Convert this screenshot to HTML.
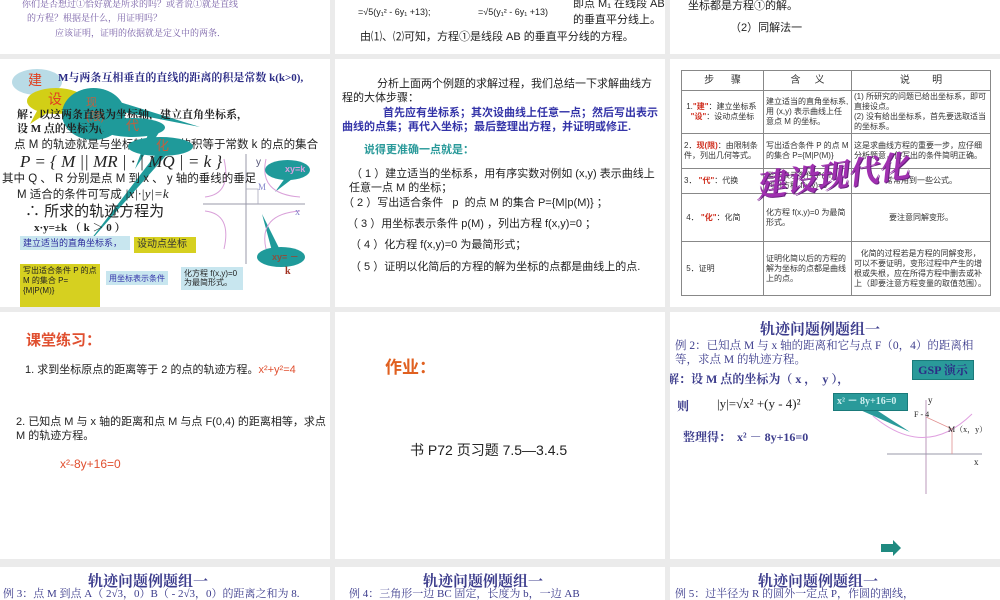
<!DOCTYPE html>
<html><head><meta charset="utf-8">
<style>
*{margin:0;padding:0;box-sizing:border-box}
body{width:1000px;height:600px;background:#ebebeb;position:relative;overflow:hidden;font-family:"Liberation Sans","Noto Sans CJK SC",sans-serif;color:#222}
.p{position:absolute;background:#fff;overflow:hidden}
.t{position:absolute;white-space:nowrap;font-size:11px;line-height:13px}
.s{font-family:"Liberation Serif","Noto Serif CJK SC",serif}
.nv{color:#2c2c86}
.ell{position:absolute;border-radius:50%}
.tl{background:#1f9a9a}
.yl{background:#d2cf16}
.box{position:absolute;font-size:9px;line-height:11px;padding:2px 3px;white-space:nowrap}
.ttl{position:absolute;font-size:15px;font-weight:bold;color:#3c3c8c;white-space:nowrap;font-family:"Liberation Serif","Noto Serif CJK SC",serif}
table{border-collapse:collapse;position:absolute;left:11px;top:11px;width:310px}
td{border:1px solid #888;font-size:8px;line-height:10px;color:#333;padding:1px 2px;vertical-align:middle}
</style></head><body>

<!-- Row 1 -->
<div class="p" style="left:0;top:0;width:330px;height:54px">
 <div class="t s" style="left:22px;top:-2px;font-size:9px;color:#7a62a8">你们是否想过①恰好就是所求的吗？或者说①就是直线</div>
 <div class="t s" style="left:27px;top:12px;font-size:9px;color:#7a62a8">的方程？根据是什么，用证明吗？</div>
 <div class="t s" style="left:55px;top:27px;font-size:9px;color:#7a62a8">应该证明，证明的依据就是定义中的两条．</div>
</div>
<div class="p" style="left:335px;top:0;width:330px;height:54px">
 <div class="t" style="left:23px;top:6px;font-size:9px">=√5(y₁² - 6y₁ +13);</div>
 <div class="t" style="left:143px;top:6px;font-size:9px">=√5(y₁² - 6y₁ +13)</div>
 <div class="t" style="left:238px;top:-2px">即点 M₁ 在线段 AB</div>
 <div class="t" style="left:238px;top:14px">的垂直平分线上。</div>
 <div class="t" style="left:25px;top:31px">由⑴、⑵可知，方程①是线段 AB 的垂直平分线的方程。</div>
</div>
<div class="p" style="left:670px;top:0;width:330px;height:54px">
 <div class="t" style="left:18px;top:0px">坐标都是方程①的解。</div>
 <div class="t" style="left:60px;top:22px">（2）同解法一</div>
</div>

<!-- Row 2 panel 1 -->
<div class="p" style="left:0;top:59px;width:330px;height:248px">
 <div class="ell" style="left:12px;top:10px;width:50px;height:26px;background:#b9dbe6"></div>
 <div class="t" style="left:28px;top:15px;font-size:14px;color:#e04020">建</div>
 <div class="t s nv" style="left:58px;top:13px;font-weight:bold">M与两条互相垂直的直线的距离的积是常数 k(k&gt;0),</div>
 <div class="ell yl" style="left:27px;top:29px;width:58px;height:26px"></div>
 <div class="t" style="left:48px;top:34px;font-size:14px;color:#e04020">设</div>
 <svg style="position:absolute;left:0;top:0" width="330" height="248">
  <polygon points="38,50 50,52 30,65" fill="#d2cf16"/>
  <polygon points="110,40 200,68 118,52" fill="#1f9a9a"/>
  <polygon points="150,70 135,110 160,72" fill="#1f9a9a"/>
  <polygon points="160,90 85,188 170,92" fill="#1f9a9a"/>
  <polygon points="288,115 275,133 296,117" fill="#1f9a9a"/>
  <polygon points="262,155 282,195 272,192" fill="#1f9a9a"/>
  <line x1="246" y1="95" x2="246" y2="205" stroke="#99a" stroke-width="1"/>
  <line x1="203" y1="145" x2="305" y2="145" stroke="#99a" stroke-width="1"/>
  <path d="M224,100 Q232,135 205,138 M266,100 Q258,135 300,138 M224,190 Q232,155 205,152 M266,190 Q258,155 300,152" fill="none" stroke="#d9a0d9" stroke-width="1"/>
  <path d="M246,130 H258 V145" fill="none" stroke="#aab" stroke-width="0.8"/>
 </svg>
 <div class="ell tl" style="left:62px;top:29px;width:63px;height:52px"></div>
 <div class="t" style="left:86px;top:37px;font-size:11px;color:#c06040;line-height:14px">现<br>(限)</div>
 <div class="t s" style="left:17px;top:50px;font-weight:bold;font-size:11px">解：以这两条直线为坐标轴，建立直角坐标系，</div>
 <div class="t s" style="left:17px;top:64px;font-weight:bold">设 M 点的坐标为(x,y)</div>
 <div class="ell tl" style="left:100px;top:59px;width:65px;height:19px"></div>
 <div class="t" style="left:126px;top:60px;font-size:13px;color:#c06040">代</div>
 <div class="t" style="left:14px;top:80px;font-size:11.5px">点 M 的轨迹就是与坐标轴的距离的积等于常数 k 的点的集合</div>
 <div class="ell tl" style="left:128px;top:78px;width:65px;height:19px"></div>
 <div class="t" style="left:156px;top:80px;font-size:13px;color:#c06040">化</div>
 <div class="t s" style="left:20px;top:93px;font-size:17px;line-height:20px;font-style:italic">P = { M || MR | · | MQ | = k }</div>
 <div class="t" style="left:2px;top:114px;font-size:11.5px">其中 Q 、 R 分别是点 M 到 x 、 y 轴的垂线的垂足</div>
 <div class="t" style="left:17px;top:128px;font-size:11.5px">M 适合的条件可写成 <i class="s" style="font-size:13px">|x|·|y|=k</i></div>
 <div class="t" style="left:25px;top:144px;font-size:15px;line-height:18px">∴ 所求的轨迹方程为</div>
 <div class="t s" style="left:34px;top:163px;font-weight:bold;font-size:11px">x·y=±k （ k ＞ 0 ）</div>
 <div class="t" style="left:256px;top:97px;font-size:10px;color:#557">y</div>
 <div class="t s" style="left:258px;top:122px;font-size:9px;color:#88c">M</div>
 <div class="t s" style="left:295px;top:147px;font-size:10px;color:#88c">x</div>
 <div class="ell tl" style="left:265px;top:101px;width:45px;height:20px"></div>
 <div class="t" style="left:285px;top:104px;font-size:9px;color:#d8a0e0;font-weight:bold">xy=k</div>
 <div class="ell tl" style="left:257px;top:188px;width:48px;height:20px"></div>
 <div class="t" style="left:272px;top:192px;font-size:9px;color:#8a5040;font-weight:bold">xy= －</div>
 <div class="t s" style="left:285px;top:206px;font-size:10px;color:#a03020;font-weight:bold">k</div>
 <div class="box" style="left:20px;top:177px;width:110px;height:14px;background:#c8e6ef;color:#2c2c9c">建立适当的直角坐标系，</div>
 <div class="box" style="left:134px;top:178px;width:62px;height:16px;background:#d6d020;color:#333;font-size:10px">设动点坐标</div>
 <div class="box" style="left:20px;top:205px;width:80px;height:43px;background:#d6d020;color:#222;font-size:8px;line-height:10px;white-space:normal">写出适合条件 P 的点<br>M 的集合 P={M|P(M)}</div>
 <div class="box" style="left:106px;top:212px;width:62px;height:14px;background:#c8e6ef;color:#3333aa;font-size:8px">用坐标表示条件</div>
 <div class="box" style="left:181px;top:208px;width:62px;height:23px;background:#c8e6ef;color:#222;font-size:8px;line-height:9px">化方程 f(x,y)=0<br>为最简形式。</div>
</div>

<!-- Row 2 panel 2 -->
<div class="p" style="left:335px;top:59px;width:330px;height:248px">
 <div class="t" style="left:42px;top:19px">分析上面两个例题的求解过程，我们总结一下求解曲线方</div>
 <div class="t" style="left:7px;top:33px">程的大体步骤：</div>
 <div class="t" style="left:48px;top:48px;font-weight:bold;color:#3434a8">首先应有坐标系；其次设曲线上任意一点；然后写出表示</div>
 <div class="t" style="left:7px;top:62px;font-weight:bold;color:#3434a8">曲线的点集；再代入坐标；最后整理出方程，并证明或修正.</div>
 <div class="t" style="left:29px;top:85px;font-weight:bold;color:#2a9a9a">说得更准确一点就是：</div>
 <div class="t" style="left:16px;top:109px">（ 1 ）建立适当的坐标系，用有序实数对例如 (x,y) 表示曲线上</div>
 <div class="t" style="left:14px;top:123px">任意一点 M 的坐标；</div>
 <div class="t" style="left:8px;top:138px">（ 2 ）写出适合条件&nbsp;&nbsp; p&nbsp; 的点 M 的集合 P={M|p(M)} ；</div>
 <div class="t" style="left:12px;top:159px">（ 3 ）用坐标表示条件 p(M) ，列出方程 f(x,y)=0 ；</div>
 <div class="t" style="left:15px;top:180px">（ 4 ）化方程 f(x,y)=0 为最简形式；</div>
 <div class="t" style="left:15px;top:202px">（ 5 ）证明以化简后的方程的解为坐标的点都是曲线上的点.</div>
</div>

<!-- Row 2 panel 3 -->
<div class="p" style="left:670px;top:59px;width:330px;height:248px">
 <table>
  <tr style="height:20px"><td style="width:82px;text-align:center;font-size:10px">步&nbsp;&nbsp;&nbsp;&nbsp;&nbsp;&nbsp;骤</td><td style="width:88px;text-align:center;font-size:10px">含&nbsp;&nbsp;&nbsp;&nbsp;&nbsp;义</td><td style="text-align:center;font-size:10px">说&nbsp;&nbsp;&nbsp;&nbsp;&nbsp;&nbsp;&nbsp;&nbsp;明</td></tr>
  <tr style="height:40px"><td>&nbsp;1.<b style="color:#d03020">"建"</b>：建立坐标系<br>&nbsp;&nbsp;&nbsp;<b style="color:#d03020">"设"</b>：设动点坐标</td><td>建立适当的直角坐标系,用 (x,y) 表示曲线上任意点 M 的坐标。</td><td>(1) 所研究的问题已给出坐标系，即可直接设点。<br>(2) 没有给出坐标系，首先要选取适当的坐标系。</td></tr>
  <tr style="height:35px"><td>2．<b style="color:#d03020">现(限)</b>：由限制条件，列出几何等式。</td><td>写出适合条件 P 的点 M 的集合 P={M|P(M)}</td><td>这是求曲线方程的重要一步，应仔细分析题意，使写出的条件简明正确。</td></tr>
  <tr style="height:25px"><td>3． <b style="color:#d03020">"代"</b>：代换</td><td>坐标表示条件 P(M)，列出方程 f(x,y)=0</td><td style="text-align:center">常常用到一些公式。</td></tr>
  <tr style="height:48px"><td>&nbsp;4． <b style="color:#d03020">"化"</b>：化简</td><td>化方程 f(x,y)=0 为最简形式。</td><td style="text-align:center">要注意同解变形。</td></tr>
  <tr style="height:54px"><td>&nbsp;5．证明</td><td>证明化简以后的方程的解为坐标的点都是曲线上的点。</td><td>&nbsp;&nbsp;&nbsp;化简的过程若是方程的同解变形，可以不要证明，变形过程中产生的增根或失根，应在所得方程中删去或补上（即要注意方程变量的取值范围）。</td></tr>
 </table>
 <div class="t" style="left:84px;top:96px;font-size:31px;line-height:38px;color:#a030b0;font-weight:bold;font-style:italic;transform:rotate(-8deg);text-shadow:1px 1px 0 #6a2080;font-family:'Noto Serif CJK SC',serif">建设现代化</div>
</div>

<!-- Row 3 -->
<div class="p" style="left:0;top:312px;width:330px;height:247px">
 <div class="t" style="left:26px;top:20px;font-size:15px;line-height:18px;font-weight:bold;color:#e05030">课堂练习：</div>
 <div class="t" style="left:25px;top:52px">1. 求到坐标原点的距离等于 2 的点的轨迹方程。<span style="color:#e05030">x²+y²=4</span></div>
 <div class="t" style="left:16px;top:104px">2. 已知点 M 与 x 轴的距离和点 M 与点 F(0,4) 的距离相等，求点</div>
 <div class="t" style="left:16px;top:118px">M 的轨迹方程。</div>
 <div class="t" style="left:60px;top:146px;color:#e05030;font-size:12px">x²-8y+16=0</div>
</div>
<div class="p" style="left:335px;top:312px;width:330px;height:247px">
 <div class="t" style="left:50px;top:46px;font-size:17px;line-height:20px;font-weight:bold;color:#e06020">作业：</div>
 <div class="t" style="left:75px;top:130px;font-size:14px;line-height:16px">书 P72 页习题 7.5—3.4.5</div>
</div>
<div class="p" style="left:670px;top:312px;width:330px;height:247px">
 <div class="ttl" style="left:90px;top:6px">轨迹问题例题组一</div>
 <div class="t s" style="left:5px;top:28px;color:#3c3c8c;font-size:11.5px">例 2：已知点 M 与 x 轴的距离和它与点 F（0，4）的距离相</div>
 <div class="t s" style="left:5px;top:42px;color:#3c3c8c;font-size:11.5px">等，求点 M 的轨迹方程。</div>
 <div style="position:absolute;left:242px;top:48px;width:62px;height:20px;background:#2a9a9a;border:1px solid #1a7a7a;color:#2c2c86;font-weight:bold;font-size:12px;line-height:18px;text-align:center;font-family:'Liberation Serif','Noto Serif CJK SC',serif">GSP 演示</div>
 <div class="t s" style="left:-3px;top:61px;color:#3c3c8c;font-weight:bold;font-size:12px">解：设 M 点的坐标为（ x ，&nbsp; y ），</div>
 <div class="t s" style="left:7px;top:88px;color:#3c3c8c;font-weight:bold;font-size:12px">则</div>
 <div class="t s" style="left:47px;top:84px;color:#222;font-size:13px;line-height:16px">|y|=√x² +(y - 4)²</div>
 <div class="t s" style="left:13px;top:119px;color:#3c3c8c;font-weight:bold;font-size:12px">整理得：&nbsp; x² － 8y+16=0</div>
 <svg style="position:absolute;left:0;top:0" width="330" height="247">
  <polygon points="188,97 205,97 240,120" fill="#2a9a9a"/>
  <line x1="256" y1="88" x2="256" y2="182" stroke="#b9b" stroke-width="1"/>
  <line x1="217" y1="142" x2="312" y2="142" stroke="#99a" stroke-width="1"/>
  <path d="M203,104 Q255,148 302,102" fill="none" stroke="#e0a0e0" stroke-width="1"/>
  <path d="M256,105 L282,117 V142" fill="none" stroke="#e09090" stroke-width="0.8"/>
 </svg>
 <div style="position:absolute;left:163px;top:81px;width:75px;height:18px;background:#2a9a9a;border:1px solid #1a7a7a;color:#d0f0f0;font-weight:bold;font-size:10px;line-height:16px;padding-left:3px;font-family:'Liberation Serif',serif">x² － 8y+16=0</div>
 <div class="t s" style="left:258px;top:82px;font-size:9px">y</div>
 <div class="t s" style="left:244px;top:96px;font-size:8px">F - 4</div>
 <div class="t s" style="left:278px;top:111px;font-size:8px">M（x，y）</div>
 <div class="t s" style="left:304px;top:144px;font-size:9px">x</div>
 <svg style="position:absolute;left:211px;top:228px" width="22" height="18"><polygon points="0,4 12,4 12,0 20,8 12,16 12,12 0,12" fill="#1f8a80"/></svg>
</div>

<!-- Row 4 -->
<div class="p" style="left:0;top:567px;width:330px;height:33px">
 <div class="ttl" style="left:88px;top:3px">轨迹问题例题组一</div>
 <div class="t s" style="left:3px;top:21px;color:#3c3c8c;font-size:11px">例 3：点 M 到点 A（ 2√3，0）B（ - 2√3，0）的距离之和为 8.</div>
</div>
<div class="p" style="left:335px;top:567px;width:330px;height:33px">
 <div class="ttl" style="left:88px;top:3px">轨迹问题例题组一</div>
 <div class="t s" style="left:14px;top:21px;color:#3c3c8c;font-size:11px">例 4：三角形一边 BC 固定，长度为 b，一边 AB</div>
</div>
<div class="p" style="left:670px;top:567px;width:330px;height:33px">
 <div class="ttl" style="left:88px;top:3px">轨迹问题例题组一</div>
 <div class="t s" style="left:5px;top:21px;color:#3c3c8c;font-size:11px">例 5：过半径为 R 的圆外一定点 P，作圆的割线，</div>
</div>
</body></html>
